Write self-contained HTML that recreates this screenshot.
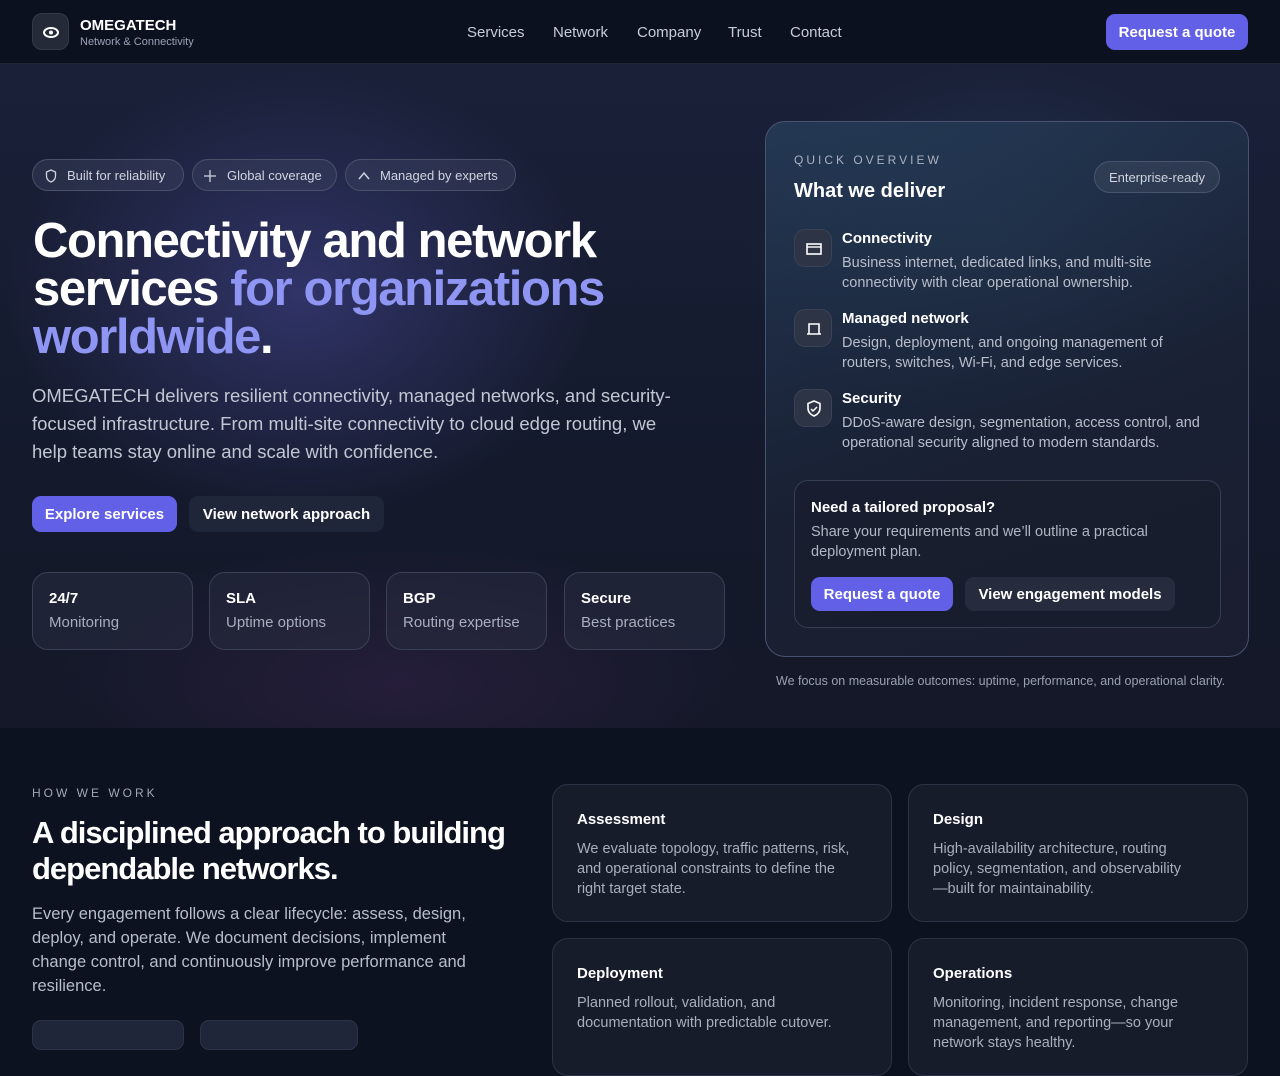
<!DOCTYPE html>
<html><head><meta charset="utf-8"><style>
*{box-sizing:border-box;margin:0;padding:0}
body{width:1280px;height:1024px;overflow:hidden;background:#0d1220;font-family:"Liberation Sans",sans-serif;color:#e6e8ef}
.hdr{position:absolute;top:0;left:0;width:1280px;height:64px;background:#0c1120;border-bottom:1px solid #1f2536;z-index:2}
.logo{position:absolute;left:32px;top:13px;width:37px;height:37px;border-radius:10px;background:#242a38;border:1px solid #323a4a}
.brand{position:absolute;left:80px;top:17px;font-weight:bold;font-size:15px;color:#fff}
.sub{position:absolute;left:80px;top:36px;font-size:11px;color:#9aa2b4}
.nav{position:absolute;top:24px;font-size:15px;color:#c8ccd6}
.btnq{position:absolute;left:1106px;top:14px;width:142px;height:36px;border-radius:9px;background:#6360e8;color:#fff;font-weight:bold;font-size:15px;text-align:center;line-height:38px}
.hero{position:absolute;top:64px;left:0;width:1280px;height:664px;background:
radial-gradient(ellipse 420px 320px at 300px 230px,rgba(80,80,170,.45),transparent 70%),
radial-gradient(ellipse 360px 260px at 1000px 180px,rgba(50,100,130,.35),transparent 70%),
radial-gradient(ellipse 500px 200px at 400px 620px,rgba(70,40,90,.35),transparent 70%),
linear-gradient(#1a2038,#141a2c 60%,#141828)}
.pill{position:absolute;top:159px;height:32px;border-radius:16px;border:1px solid #4a5068;background:rgba(60,66,96,.45);font-size:13px;color:#d0d4e0;line-height:32px;padding-left:34px}
h1{position:absolute;left:33px;top:217px;font-size:49px;line-height:48px;letter-spacing:-1.4px;font-weight:bold;color:#fff;width:700px}
h1 span{color:#8f95f2}
.lead{position:absolute;left:32px;top:382px;width:650px;font-size:18.5px;line-height:28px;color:#c2c6d2}
.b1{position:absolute;left:32px;top:496px;width:145px;height:36px;border-radius:9px;background:#6360e8;color:#fff;font-weight:bold;font-size:15px;text-align:center;line-height:38px}
.b2{position:absolute;left:189px;top:496px;width:195px;height:36px;border-radius:9px;background:#20263a;color:#fff;font-weight:bold;font-size:15px;text-align:center;line-height:38px}
.st{position:absolute;top:572px;width:161px;height:78px;border-radius:16px;border:1px solid #3a4056;background:rgba(40,44,64,.55);padding:17px 16px}
.st b{display:block;font-size:15px;color:#fff;margin-bottom:7px}.st i{font-style:normal;font-size:15px;color:#a8aebd}
.card{position:absolute;left:765px;top:121px;width:484px;height:536px;border-radius:20px;border:1px solid #4a5272;background:linear-gradient(160deg,rgba(40,66,96,.7),rgba(26,34,54,.85) 55%,rgba(28,30,48,.9))}
.ov{position:absolute;left:28px;top:31px;font-size:12px;letter-spacing:3px;color:#aab0c0}
.ct{position:absolute;left:28px;top:58px;font-size:20px;font-weight:bold;color:#fff}
.ent{position:absolute;left:328px;top:39px;width:126px;height:32px;border-radius:16px;border:1px solid #4a5470;background:rgba(60,72,96,.5);font-size:13px;color:#d0d4de;text-align:center;line-height:32px}
.it{position:absolute;left:28px;width:420px}
.ic{position:absolute;left:0;top:0;width:38px;height:38px;border-radius:11px;background:#2c3446;border:1px solid #3a4256}
.it b{position:absolute;left:48px;top:1px;font-size:15px;color:#fff}
.it p{position:absolute;left:48px;top:24px;font-size:14.5px;line-height:20px;color:#b8bdca;width:340px}
.it p.w{width:375px}
.prop{position:absolute;left:28px;top:358px;width:427px;height:148px;border-radius:14px;border:1px solid #363e52;background:rgba(24,30,46,.75)}
.note{position:absolute;left:776px;top:674px;font-size:12.5px;color:#9aa0b0}
.how{position:absolute;left:32px;top:786px;font-size:12px;letter-spacing:3px;color:#a0a6b4}
h2{position:absolute;left:32px;top:815px;font-size:31px;line-height:36px;letter-spacing:-1px;color:#fff;width:500px}
.lead2{position:absolute;left:32px;top:902px;width:462px;font-size:16.5px;line-height:24px;color:#b8bdca}
.sc{position:absolute;width:340px;height:138px;border-radius:16px;border:1px solid #2c3346;background:#171c2a;padding:26px 24px}
.sc b{display:block;font-size:15px;color:#fff;margin-bottom:11px}.sc p{font-size:14.5px;line-height:20px;color:#a8aebd;width:285px}
.gb{position:absolute;top:1020px;height:30px;border-radius:9px;background:#20263a;border:1px solid #2c3346}
</style></head><body>
<div class="hdr">
<div class="logo"><svg width="37" height="37" viewBox="0 0 37 37"><ellipse cx="18" cy="18.5" rx="7" ry="4.5" fill="none" stroke="#fff" stroke-width="2"/><circle cx="18" cy="18.5" r="2" fill="#fff"/></svg></div>
<div class="brand">OMEGATECH</div><div class="sub">Network &amp; Connectivity</div>
<div class="nav" style="left:467px">Services</div><div class="nav" style="left:553px">Network</div><div class="nav" style="left:637px">Company</div><div class="nav" style="left:728px">Trust</div><div class="nav" style="left:790px">Contact</div>
<div class="btnq">Request a quote</div>
</div>
<div class="hero"></div>
<div class="pill" style="left:32px;width:152px"><svg style="position:absolute;left:12px;top:9px" width="12" height="14" viewBox="0 0 12 14"><path d="M6 1L1.5 3v4c0 3 2 5 4.5 6 2.5-1 4.5-3 4.5-6V3z" fill="none" stroke="#cfd3de" stroke-width="1.3"/></svg>Built for reliability</div>
<div class="pill" style="left:192px;width:145px"><svg style="position:absolute;left:11px;top:10px" width="12" height="12"><path d="M6 0v12M0 6h12" stroke="#cfd3de" stroke-width="1.3"/></svg>Global coverage</div>
<div class="pill" style="left:345px;width:171px"><svg style="position:absolute;left:12px;top:11px" width="12" height="10"><path d="M1 8L6 2l5 6" fill="none" stroke="#cfd3de" stroke-width="1.5"/></svg>Managed by experts</div>
<h1>Connectivity and network services <span>for organizations worldwide</span>.</h1>
<div class="lead">OMEGATECH delivers resilient connectivity, managed networks, and security-focused infrastructure. From multi-site connectivity to cloud edge routing, we help teams stay online and scale with confidence.</div>
<div class="b1">Explore services</div><div class="b2">View network approach</div>
<div class="st" style="left:32px"><b>24/7</b><i>Monitoring</i></div>
<div class="st" style="left:209px"><b>SLA</b><i>Uptime options</i></div>
<div class="st" style="left:386px"><b>BGP</b><i>Routing expertise</i></div>
<div class="st" style="left:564px"><b>Secure</b><i>Best practices</i></div>
<div class="card">
<div class="ov">QUICK OVERVIEW</div><div class="ct">What we deliver</div><div class="ent">Enterprise-ready</div>
<div class="it" style="top:107px"><div class="ic"><svg width="38" height="38"><rect x="12" y="14" width="14" height="10" fill="none" stroke="#fff" stroke-width="1.6"/><path d="M12 17h14" stroke="#fff" stroke-width="1.4"/></svg></div><b>Connectivity</b><p>Business internet, dedicated links, and multi-site connectivity with clear operational ownership.</p></div>
<div class="it" style="top:187px"><div class="ic"><svg width="38" height="38"><path d="M14 24V14h10v10M12 24h14" fill="none" stroke="#fff" stroke-width="1.6"/></svg></div><b>Managed network</b><p>Design, deployment, and ongoing management of routers, switches, Wi-Fi, and edge services.</p></div>
<div class="it" style="top:267px"><div class="ic"><svg width="38" height="38"><path d="M19 11l-6 2.5v4.5c0 4 2.5 6.5 6 8 3.5-1.5 6-4 6-8v-4.5z" fill="none" stroke="#fff" stroke-width="1.6"/><path d="M16 19l2 2 4-4" fill="none" stroke="#fff" stroke-width="1.5"/></svg></div><b>Security</b><p class="w">DDoS-aware design, segmentation, access control, and operational security aligned to modern standards.</p></div>
<div class="prop">
<div style="position:absolute;left:16px;top:18px;font-size:15px;font-weight:bold;color:#fff">Need a tailored proposal?</div>
<div style="position:absolute;left:16px;top:41px;width:360px;font-size:14.5px;line-height:20px;color:#b0b6c4">Share your requirements and we’ll outline a practical deployment plan.</div>
<div style="position:absolute;left:16px;top:96px;width:142px;height:34px;border-radius:9px;background:#6360e8;color:#fff;font-weight:bold;font-size:15px;text-align:center;line-height:36px">Request a quote</div>
<div style="position:absolute;left:170px;top:96px;width:210px;height:34px;border-radius:9px;background:#262c3e;color:#fff;font-weight:bold;font-size:15px;text-align:center;line-height:36px">View engagement models</div>
</div>
</div>
<div class="note">We focus on measurable outcomes: uptime, performance, and operational clarity.</div>
<div class="how">HOW WE WORK</div>
<h2>A disciplined approach to building dependable networks.</h2>
<div class="lead2">Every engagement follows a clear lifecycle: assess, design, deploy, and operate. We document decisions, implement change control, and continuously improve performance and resilience.</div>
<div class="gb" style="left:32px;width:152px"></div><div class="gb" style="left:200px;width:158px"></div>
<div class="sc" style="left:552px;top:784px"><b>Assessment</b><p>We evaluate topology, traffic patterns, risk, and operational constraints to define the right target state.</p></div>
<div class="sc" style="left:908px;top:784px"><b>Design</b><p style="width:262px">High-availability architecture, routing policy, segmentation, and observability—built for maintainability.</p></div>
<div class="sc" style="left:552px;top:938px"><b>Deployment</b><p>Planned rollout, validation, and documentation with predictable cutover.</p></div>
<div class="sc" style="left:908px;top:938px"><b>Operations</b><p>Monitoring, incident response, change management, and reporting—so your network stays healthy.</p></div>
</body></html>
